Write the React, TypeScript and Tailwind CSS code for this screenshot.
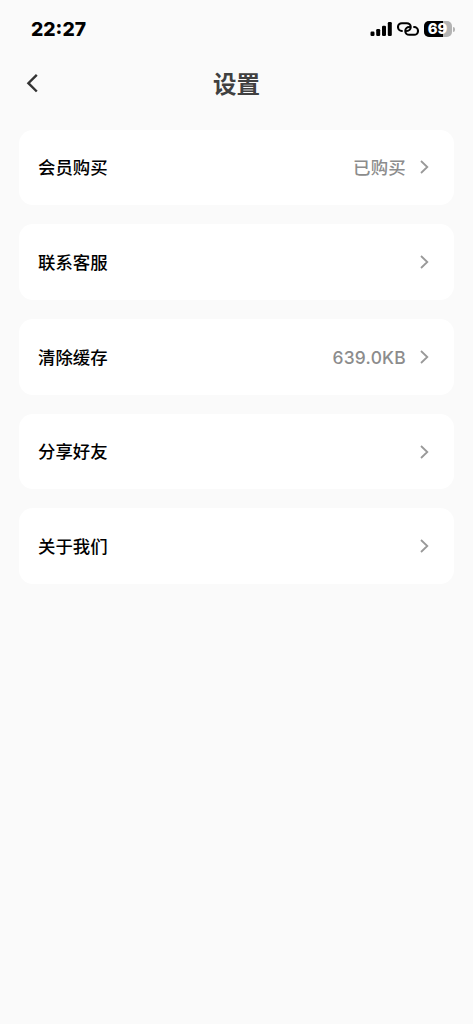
type Row = {
  label: string;
  value?: string;
};

const ROWS: Row[] = [
  { label: "会员购买", value: "已购买" },
  { label: "联系客服" },
  { label: "清除缓存", value: "639.0KB" },
  { label: "分享好友" },
  { label: "关于我们" },
];

export default function App() {
  return (
    <div className="flex min-h-screen w-full flex-col bg-[#fafafa] font-['Inter','Noto_Sans_CJK_SC',sans-serif] text-black">
      <StatusBar />
      <Header title="设置" />
      <main className="flex flex-col gap-[19px] px-[19px] pt-[21.6px]">
        {ROWS.map((row) => (
          <SettingRow key={row.label} {...row} />
        ))}
      </main>
    </div>
  );
}

function StatusBar() {
  return (
    <div className="flex h-[58px] items-center justify-between pr-[18px] pl-[31px]">
      <span className="pt-px text-[19.3px] font-extrabold">22:27</span>
      <div className="flex items-center gap-[5px]">
        <SignalIcon />
        <LinkIcon />
        <Battery level={69} />
      </div>
    </div>
  );
}

function SignalIcon() {
  return (
    <svg width="22" height="14" viewBox="0 0 22 14" fill="currentColor">
      <rect x="0.5" y="9.5" width="4" height="4.5" rx="1.2" />
      <rect x="6.2" y="7" width="4" height="7" rx="1.2" />
      <rect x="12" y="3.7" width="4" height="10.3" rx="1.2" />
      <rect x="17.8" y="0" width="4" height="14" rx="1.2" />
    </svg>
  );
}

// two interlocked loops, the hotspot indicator
function LinkIcon() {
  return (
    <svg width="22" height="14" viewBox="0 0 22 14" fill="none" stroke="currentColor" strokeWidth="2.1" strokeLinecap="round">
      <path d="M4.9 9 A3.9 3.9 0 0 1 4.9 1.2 H9.8 A3.9 3.9 0 0 1 9.8 9" />
      <path d="M17.1 5 A3.9 3.9 0 0 1 17.1 12.8 H12.2 A3.9 3.9 0 0 1 12.2 5" />
    </svg>
  );
}

function Battery({ level }: { level: number }) {
  return (
    <div className="flex items-center gap-px">
      <div className="relative flex h-4 w-7 items-center justify-center rounded-[5px] bg-[#b3b3b3]">
        <div className="absolute inset-y-0 left-0 rounded-l-[5px] bg-black" style={{ width: `${level}%` }} />
        <span className="relative pt-px pr-px text-[14.8px] leading-[15px] font-extrabold text-white">{level}</span>
      </div>
      <div className="h-[5px] w-[2px] rounded-r-full bg-[#b3b3b3]" />
    </div>
  );
}

function Header({ title }: { title: string }) {
  return (
    <header className="grid h-[50px] grid-cols-[1fr_auto_1fr] items-center px-[26px]">
      <svg width="12" height="20" viewBox="0 0 12 20" fill="none" stroke="#333" strokeWidth="2.4">
        <path d="M10.8 1.9 L2.4 10.2 L10.8 18.5" />
      </svg>
      <h1 className="pt-[3px] text-[23.5px] font-bold text-[#404040]">{title}</h1>
    </header>
  );
}

function SettingRow({ label, value }: Row) {
  return (
    <div className="flex h-[75.7px] items-center rounded-[14px] bg-white pr-[25px] pl-[19px]">
      <span className="pt-[1.6px] text-[17.4px] font-medium">{label}</span>
      <span className="ml-auto pt-[1.6px] text-[17.4px] font-medium tracking-[0.25px] text-[#8c8c8c]">{value}</span>
      <svg className="ml-[14px]" width="9" height="14" viewBox="0 0 9 14" fill="none" stroke="#999" strokeWidth="1.8">
        <path d="M1 1 L7.3 7 L1 13" />
      </svg>
    </div>
  );
}
